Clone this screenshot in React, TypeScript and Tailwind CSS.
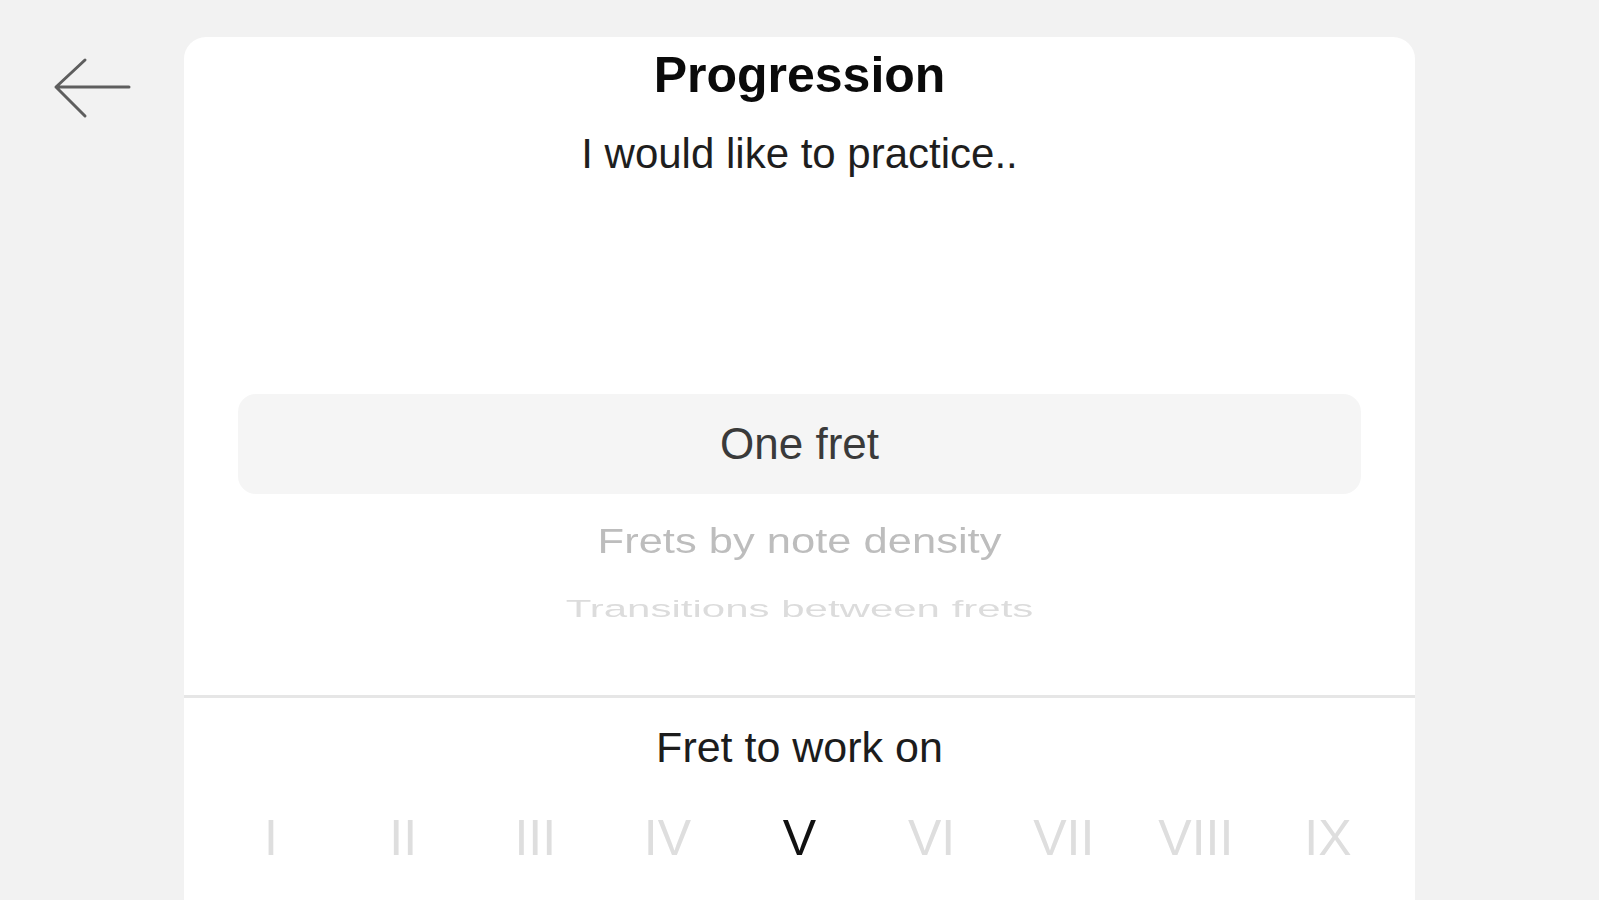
import React from "react";

const numerals = ["I", "II", "III", "IV", "V", "VI", "VII", "VIII", "IX"];

export default function App() {
  return (
    <div
      className="h-[900px] w-full overflow-hidden bg-[#f2f2f2] grid grid-cols-[184px_1231px_1fr]"
      style={{ fontFamily: '"Liberation Sans", Arial, Helvetica, sans-serif' }}
    >
      <div className="pl-[50px] pt-[55px]">
        <svg width="86" height="66" viewBox="0 0 86 66" fill="none">
          <path
            d="M79 32H6M35 5L6 32L35 61"
            stroke="#5e5e5e"
            strokeWidth="3"
            strokeLinecap="round"
            strokeLinejoin="round"
          />
        </svg>
      </div>

      <div className="mt-[37px] h-[863px] rounded-t-[22px] bg-white flex flex-col">
        <div className="pt-[10px] text-center text-[50px] leading-[56px] font-bold text-[#0a0a0a]">
          Progression
        </div>
        <div className="mt-[27px] text-center text-[42px] leading-[48px] text-[#1e1e1e]">
          I would like to practice..
        </div>

        <div className="h-[517px] flex flex-col px-[54px]">
          <div className="mt-[216px] h-[100px] rounded-[18px] bg-[#f5f5f5] flex items-center justify-center text-[44px] text-[#3a3a3a]">
            One fret
          </div>
          <div className="mt-[23px] h-[48px] flex items-center justify-center">
            <span className="text-[43.5px] leading-[48px] text-[#bdbdbd] scale-y-[0.8] inline-block">
              Frets by note density
            </span>
          </div>
          <div className="mt-[20px] h-[48px] flex items-center justify-center">
            <span className="text-[42px] leading-[48px] text-[#dcdcdc] scale-y-[0.57] inline-block blur-[0.6px]">
              Transitions between frets
            </span>
          </div>
        </div>

        <div className="border-t-[3px] border-[#e6e6e6]" />

        <div className="mt-[25px] text-center text-[43px] leading-[48px] text-[#1c1c1c]">
          Fret to work on
        </div>

        <div className="mt-[39px] px-[21px] grid grid-cols-9">
          {numerals.map((n) => (
            <div
              key={n}
              className={
                "text-center text-[50px] leading-[56px] " +
                (n === "V" ? "text-[#111111]" : "text-[#dedede]")
              }
            >
              {n}
            </div>
          ))}
        </div>
      </div>

      <div />
    </div>
  );
}
